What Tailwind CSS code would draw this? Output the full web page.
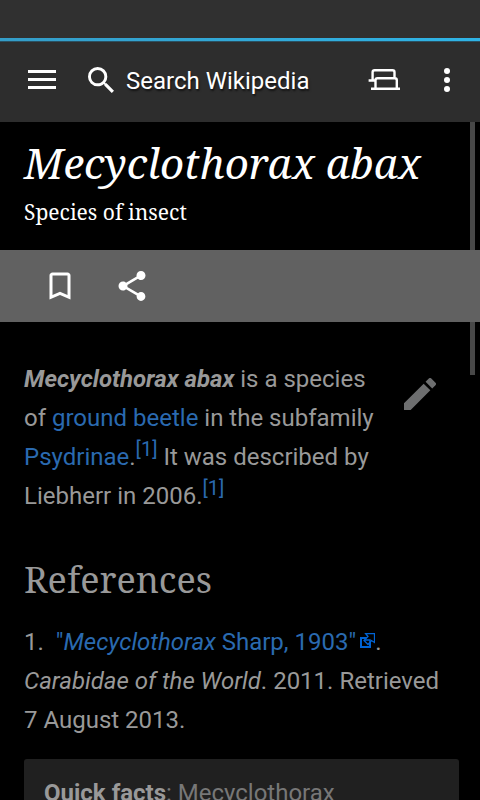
<!DOCTYPE html>
<html lang="en">
<head>
<meta charset="utf-8">
<meta name="viewport" content="width=device-width, initial-scale=1">
<title>Mecyclothorax abax</title>
<script src="https://cdn.jsdelivr.net/npm/@tailwindcss/browser@4"></script>
</head>
<body class="relative min-h-screen bg-black font-['Roboto',sans-serif] text-2xl text-[#999999]">
<header class="bg-[#2d2d2d] text-white">
  <div class="h-[38px] bg-[#303030]"></div>
  <div class="h-[3px] bg-gradient-to-r from-[#349dc8] to-[#2fb4e6]"></div>
  <div class="h-px bg-[#2b5162]"></div>
  <div class="flex items-center px-3 pt-[14px] pb-[18px]">
    <button class="flex h-12 w-15 items-center justify-center" aria-label="Menu">
      <svg class="h-5 w-7" viewBox="0 0 28 20" fill="currentColor"><path d="M0 0h28v3H0zM0 8h28v3H0zM0 16h28v3H0z"/></svg>
    </button>
    <button class="ml-4 flex h-12 flex-1 items-center gap-3 whitespace-nowrap">
      <svg class="h-[26px] w-[26px]" viewBox="3 3 17.5 17.5" fill="currentColor"><path d="M15.5 14h-.79l-.28-.27A6.47 6.47 0 0 0 16 9.5 6.5 6.5 0 1 0 9.5 16c1.61 0 3.09-.59 4.23-1.57l.27.28v.79l5 4.99L20.49 19l-4.99-5zm-6 0C7.01 14 5 11.99 5 9.5S7.01 5 9.5 5 14 7.01 14 9.5 11.99 14 9.5 14z"/></svg>
      <span class="pt-0.5 [text-shadow:1px_2px_2px_#00000099]">Search Wikipedia</span>
    </button>
    <button class="flex h-12 w-15 items-center justify-center" aria-label="Tabs">
      <svg class="h-[22px] w-8" viewBox="0 0 32 22" fill="none" stroke="currentColor" stroke-width="2.4"><path d="M0.600 11.500H7M4.600 11V3.200Q4.600 1.200 6.600 1.200H24.500Q26.500 1.200 26.500 3.200V9M7.500 20V11.200Q7.500 9.200 9.500 9.200H26.800Q28.800 9.200 28.800 11.200V20M3 19.800H32"/></svg>
    </button>
    <button class="flex h-12 w-[54px] items-center justify-center pl-3" aria-label="More options">
      <svg class="h-6 w-1.5" viewBox="0 0 6 24" fill="currentColor"><circle cx="3" cy="3" r="3"/><circle cx="3" cy="12" r="3"/><circle cx="3" cy="21" r="3"/></svg>
    </button>
  </div>
</header>
<div class="absolute top-[122px] right-[5px] h-[253px] w-[5px] bg-[#484848]"></div>
<main>
  <div class="px-6 pt-3 pb-[18px] font-['Noto_Serif','Droid_Serif','DejaVu_Serif',serif] text-white">
    <h1 class="text-[42px] leading-[58px] italic">Mecyclothorax abax</h1>
    <p class="text-[21px] leading-10">Species of insect</p>
  </div>
  <div class="relative flex items-center bg-[#616161] px-6 text-white">
    <button class="flex h-18 w-18 items-center justify-center" aria-label="Save page">
      <svg class="h-9 w-9" viewBox="0 0 24 24" fill="currentColor"><path d="M17 3H7c-1.100 0-2 .9-2 2v16l7-3 7 3V5c0-1.100-.9-2-2-2zm0 15l-5-2.180L7 18V5h10v13z"/></svg>
    </button>
    <button class="flex h-18 w-18 items-center justify-center" aria-label="Share">
      <svg class="h-9 w-9" viewBox="0 0 24 24" fill="currentColor"><path d="M18 16.080c-.76 0-1.440.3-1.960.77L8.910 12.700c.05-.23.09-.46.09-.7s-.04-.47-.09-.7l7.050-4.110c.54.5 1.250.81 2.040.81 1.660 0 3-1.340 3-3s-1.340-3-3-3-3 1.340-3 3c0 .24.04.47.09.7L8.040 9.810C7.500 9.310 6.790 9 6 9c-1.660 0-3 1.340-3 3s1.340 3 3 3c.79 0 1.500-.31 2.040-.81l7.120 4.160c-.05.21-.08.43-.08.65 0 1.610 1.310 2.920 2.920 2.920s2.920-1.310 2.920-2.920-1.310-2.920-2.920-2.920z"/></svg>
    </button>
  </div>
  <article class="px-6 pt-[38px]">
    <button class="float-right flex h-16 w-[76px] items-start pt-[18px] pl-6 text-[#6d6e6f]" aria-label="Edit section">
      <svg class="h-8 w-8" viewBox="3 3 18 18" fill="currentColor"><path d="M3 17.250V21h3.750L17.810 9.940l-3.750-3.750L3 17.250zM20.710 7.040a1 1 0 0 0 0-1.410l-2.340-2.340a1 1 0 0 0-1.410 0l-1.830 1.830 3.750 3.750 1.830-1.830z"/></svg>
    </button>
    <p class="leading-[39px]"><b><i>Mecyclothorax abax</i></b> is a species of <a href="#" class="text-[#2a6ab0]">ground beetle</a> in the subfamily <a href="#" class="text-[#2a6ab0]">Psydrinae</a>.<a href="#ref" class="relative -top-[9px] text-xl leading-none text-[#2a6ab0]">[1]</a> It was described by Liebherr in 2006.<a href="#ref" class="relative -top-[9px] text-xl leading-none text-[#2a6ab0]">[1]</a></p>
    <h2 class="clear-both pt-[39px] pb-[18px] font-['Noto_Serif','Droid_Serif','DejaVu_Serif',serif] text-4xl leading-[50px]">References</h2>
    <p id="ref" class="leading-[39px]"><span class="mr-3">1.</span><a href="#" class="text-[#2a6ab0]">"<i>Mecyclothorax</i> Sharp, 1903"<svg class="mb-0.5 ml-1 inline-block h-[15px] w-[15px] align-baseline text-[#0063d4]" viewBox="0 0 15 15" stroke="currentColor"><path d="M1 5H10V14H1Z" fill="none" stroke-width="2"/><path d="M5.500 .5H14.500V9.500L11.500 7.500L8 11.500L4 7.500L8 3.500Z" fill="#000" stroke-width="1.300"/><path d="M5 7H10V10" fill="none" stroke-width="1.500"/></svg></a>. <i>Carabidae of the World</i>. 2011. Retrieved 7 August 2013.</p>
    <section class="mt-[19px] -mr-[3px] rounded-[3px] bg-[#202020] px-5 py-4 leading-9 text-[#777777]"><b class="text-[#999999]">Quick facts</b>: Mecyclothorax</section>
  </article>
</main>
</body>
</html>
